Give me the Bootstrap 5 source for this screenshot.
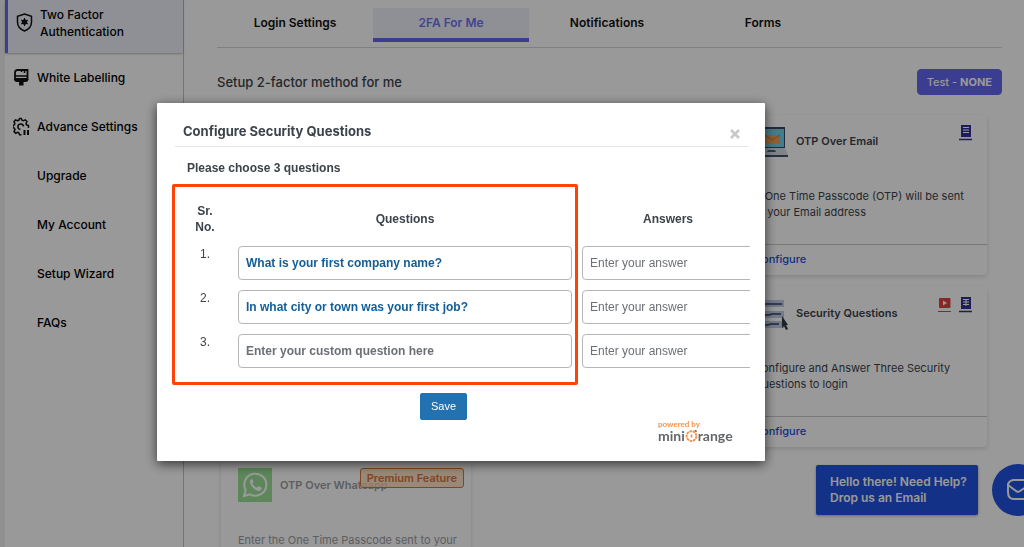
<!DOCTYPE html>
<html lang="en">
<head>
<meta charset="utf-8">
<meta name="viewport" content="width=device-width, initial-scale=1">
<title>Two Factor Authentication</title>
<link href="https://cdn.jsdelivr.net/npm/bootstrap@5.3.0/dist/css/bootstrap.min.css" rel="stylesheet">
<style>
  body { font-family: Inter, "Liberation Sans", sans-serif; font-size: 11px; line-height: 16px; background: #f0f0f1; color: #3c434a; }
  a { text-decoration: none; }
  .app { background: #fff; margin-left: 5px; }

  /* sidebar */
  .side { flex: 0 0 179px; border-right: 1px solid #c3c4c7; font-size: 12px; font-weight: 500; }
  .side a { color: #000; height: 49px; padding: 0 8px; gap: 7px; }
  .side a svg { flex: none; width: 17px; height: 19px; }
  .side a.plain { padding-left: 32px; }
  .side a.current { height: 53px; padding-bottom: 8px; border-left: 3px solid #6366f1; background: #eff1fa; box-shadow: 0 1px 2px #0004; line-height: 17px; }

  /* main area */
  .content-area { padding: 8px 22px 0 33px; }
  .tabs { border-bottom: 1px solid #d4d6da; padding-bottom: 5px; font-size: 12px; font-weight: 600; }
  .tabs a { flex: 0 0 156px; height: 34px; padding-top: 7px; color: #111; text-align: center; border-bottom: 4px solid transparent; }
  .tabs a.active { color: #6d73f0; background: #eff1fa; border-color: #6366f1; }
  .title-row { margin: 21px 0 20px; }
  .page-title { font-size: 13px; font-weight: 500; line-height: 20px; color: #3c434a; }
  .btn-test { --bs-btn-color: #fff; --bs-btn-bg: #6366f1; --bs-btn-border-color: #6366f1; --bs-btn-font-size: 11px; --bs-btn-font-weight: 500; --bs-btn-line-height: 16px; --bs-btn-padding-y: 4px; --bs-btn-padding-x: 9px; --bs-btn-border-radius: 4px; }
  .methods { --bs-gutter-x: 8px; --bs-gutter-y: 12px; margin-right: 11px; margin-left: 0; }
  .method { height: 160px; border: 0; border-radius: 4px; box-shadow: 0 2px 4px #0002; color: inherit; }
  .method-head { height: 73px; padding: 9px 14px 0 17px; gap: 8px; }
  .method-head h3 { font-size: 11px; font-weight: 600; line-height: 34px; margin: 0; }
  .method-text { padding: 0 8px 0 17px; flex: 1; margin: 0; }
  .method-foot { height: 31px; padding: 6px 17px; border-top: 1px solid #c9cacd; }
  .method-foot a { color: #1d4ed8; font-weight: 500; }
  .faded { color: #9a9da1; }
  .premium { top: 9px; right: 7px; height: 20px; padding: 1px 6px; font-size: 11px; font-weight: 600; color: #d9733b; background: #ffdcb8bf; border: 1px solid #d9733b; border-radius: 3px; }

  /* help bubble */
  .help { right: 46px; bottom: 32px; width: 162px; height: 50px; padding: 9px 8px 9px 14px; background: #2152e0; color: #fff; font-size: 12px; font-weight: 600; border-radius: 2px; box-shadow: 0 1px 3px #0005; }
  .help-icon { right: -20px; bottom: 31px; width: 52px; height: 52px; border: 0; padding: 0; }

  /* dialog */
  .modal { background: #0006; font-family: "Liberation Sans", Arial, sans-serif; font-size: 12px; padding-right: 102px; }
  .modal-dialog { max-width: 608px; margin: 103px auto 0; }
  .modal-content { border: 0; border-radius: 1px; box-shadow: 0 3px 12px #000a; color: #3c434a; padding: 17px 15px 19px 18px; }
  .modal-header { padding: 0 7px 4px 8px; border-bottom: 1px solid #e4e5e7; border-radius: 0; height: 27px; margin-right: 2px; }
  .modal-title { font-family: Inter, "Liberation Sans", sans-serif; font-size: 13px; line-height: 22px; font-weight: 700; }
  .close-x { border: 0; background: none; padding: 8px 0 0; line-height: 10px; }
  .modal-body { padding: 13px 0 0; }
  .lead-in { padding-left: 12px; margin: 0 0 20px; font-weight: 700; }
  .qa-wrap { overflow: hidden; }
  .qa { width: 590px; table-layout: fixed; margin-left: 2px; }
  .qa th { height: 45px; text-align: center; vertical-align: middle; padding: 0 5px; }
  .qa td { height: 44px; padding: 5px; vertical-align: top; text-align: center; }
  .qa .form-control, .qa .form-select { height: 34px; padding: 0 7px; border: 1px solid #b4b6b9; border-radius: 4px; font-size: 12px; line-height: 16px; background: #fff; color: #3c434a; }
  .qa .ask { font-weight: 700; }
  .qa .form-select { color: #135e96; }
  .qa .form-control::placeholder { color: #6c7075; opacity: 1; }
  .highlight { left: -3px; top: 37px; width: 406px; height: 201px; border: 3px solid #ff4208; border-radius: 2px; pointer-events: none; }
  .btn-save { --bs-btn-color: #fff; --bs-btn-bg: #2271b1; --bs-btn-border-color: #2271b1; --bs-btn-font-size: 11px; --bs-btn-line-height: 17px; --bs-btn-padding-y: 4px; --bs-btn-padding-x: 10px; --bs-btn-border-radius: 2px; }
  .save-row { padding: 20px 38px 0 0; }
  .brand { font-family: Lato, sans-serif; color: #63666a; width: 76px; line-height: 12px; font-size: 14px; font-weight: 700; }
  .brand-top { color: #f5924c; font-size: 8px; line-height: 9px; }
</style>
</head>
<body>
<div class="vh-100 overflow-hidden position-relative">
  <div class="app d-flex h-100">
    <nav class="side d-flex flex-column">
      <a href="#" class="current d-flex align-items-center">
        <svg viewBox="0 0 17 19" fill="none" stroke="#111" stroke-width="1.5"><path d="M8.500 1 L15.500 3.400 V9 C15.500 13.500 12.500 16.500 8.500 18 C4.500 16.500 1.500 13.500 1.500 9 V3.400 Z"/><circle cx="8.500" cy="9" r="2" fill="#111"/><path d="M8.500 5v8M5 7l7 4M12 7l-7 4" stroke-width="1"/></svg>
        <span>Two Factor Authentication</span></a>
      <a href="#" class="d-flex align-items-center">
        <svg viewBox="0 0 17 19" fill="none" stroke="#111" stroke-width="1.800"><path d="M2 11V4.500Q2 2 4.500 2H14.500V11Z"/><path d="M2 8H15M11.500 2v3M8.500 2v2" stroke-width="1.500"/><path d="M2 11q0 2 2 2h8.500q2 0 2-2"/><path d="M8.300 13v4.500" stroke-width="4.500"/></svg>
        <span>White Labelling</span></a>
      <a href="#" class="d-flex align-items-center">
        <svg viewBox="0 0 17 19" fill="none" stroke="#111" stroke-width="1.500"><path d="M15.500 11V8.500l-2-.7-.5-1.300 1-2-1.800-1.700-2 1L9 3.300 8.300 1.500H6.500L5.800 3.300l-1.300.5-2-.9L1 4.700l.9 1.900-.5 1.200-1.400.8v2l1.500.7.5 1.400-1 1.900 1.700 1.700 2-.9 1.200.5.600 1.800h2"/><path d="M10.500 9.500a2.800 2.800 0 1 0-3 3"/><path d="M11.500 13v5M15 13v5" stroke-width="2"/></svg>
        <span class="text-nowrap">Advance Settings</span></a>
      <a href="#" class="plain d-flex align-items-center">Upgrade</a>
      <a href="#" class="plain d-flex align-items-center">My Account</a>
      <a href="#" class="plain d-flex align-items-center">Setup Wizard</a>
      <a href="#" class="plain d-flex align-items-center">FAQs</a>
    </nav>

    <main class="content-area flex-grow-1">
      <nav class="tabs d-flex">
        <a href="#">Login Settings</a>
        <a href="#" class="active">2FA For Me</a>
        <a href="#">Notifications</a>
        <a href="#">Forms</a>
      </nav>
      <div class="title-row d-flex justify-content-between align-items-center">
        <h2 class="page-title m-0">Setup 2-factor method for me</h2>
        <button type="button" class="btn btn-test">Test - <b>NONE</b></button>
      </div>
      <div class="methods row">
        <div class="col-4 offset-8">
          <section class="method card">
            <div class="method-head d-flex">
              <svg width="34" height="34" viewBox="0 0 34 34"><rect x="3" y="3" width="28" height="21" fill="#324a68"/><rect x="4" y="5" width="26" height="18" fill="#6fd0e6"/><path d="M11 11h15v9H11z" fill="#f0a050"/><path d="M11 11l7.500 5L26 11" fill="none" stroke="#d17b35"/><path d="M3 24h28l3 7H0z" fill="#d7dde6"/><path d="M14 26h7l1 2h-9z" fill="#52627a"/><path d="M0 31h34v2H0z" fill="#41526c"/></svg>
              <h3>OTP Over Email</h3>
              <svg class="ms-auto" width="14" height="17" viewBox="0 0 14 17"><path d="M2 1h10v12H2z" fill="#35309a"/><path d="M4 3.500h6M4 6h6M4 8.500h6" stroke="#fff" stroke-width="1"/><path d="M0 15.500h13" stroke="#35309a" stroke-width="1.500"/></svg>
            </div>
            <p class="method-text">A One Time Passcode (OTP) will be sent<br>to your Email address</p>
            <div class="method-foot"><a href="#">Configure</a></div>
          </section>
        </div>
        <div class="col-4 offset-8">
          <section class="method card">
            <div class="method-head d-flex">
              <svg width="34" height="34" viewBox="0 0 34 34"><path d="M2 4h28v7H2zM2 15h28v7H2zM2 25h28v7H2z" fill="#c0ccea"/><path d="M5 8h10M14 8h14M5 19h10l3-1h9M5 29h8l4-1h8" stroke="#34435d" stroke-width="1.500" fill="none"/><path d="M28 20v12l2-2 2 4 2-1-2-4h2z" fill="#303641"/></svg>
              <h3>Security Questions</h3>
              <span class="ms-auto d-flex gap-2 align-items-start">
                <svg width="13" height="17" viewBox="0 0 13 17"><rect x="1" y="2" width="11.500" height="10" rx="1" fill="#e84040"/><path d="M5 4.500v5l4-2.500z" fill="#fff"/><path d="M0 15.500h13" stroke="#e84040"/></svg>
                <svg width="14" height="17" viewBox="0 0 14 17"><path d="M2 1h10v12H2z" fill="#35309a"/><path d="M4 3.500h6M4 6h6M4 8.500h6M7 3v7" stroke="#fff" stroke-width="1"/><path d="M0 15.500h13" stroke="#35309a" stroke-width="1.500"/></svg>
              </span>
            </div>
            <p class="method-text">Configure and Answer Three Security<br>Questions to login</p>
            <div class="method-foot"><a href="#">Configure</a></div>
          </section>
        </div>
        <div class="col-4">
          <section class="method card faded">
            <div class="method-head d-flex">
              <svg width="34" height="34" viewBox="0 0 34 34"><path d="M0 0h34v34H0z" fill="#9be096"/><path d="M6 28l1.700-6A11 11 0 1 1 12 26.300Z" fill="none" stroke="#fff" stroke-width="2"/><path d="M13.500 11q-2 1-1.500 3.500 2 6.500 8 8.500 3 0 3.800-2.500l-.3-1-3-1.500-1.500 1.700q-3-1-4.500-4l1-1.500-1-3z" fill="#fff"/></svg>
              <h3>OTP Over Whatsapp</h3>
              <span class="premium position-absolute">Premium Feature</span>
            </div>
            <p class="method-text">Enter the One Time Passcode sent to your</p>
          </section>
        </div>
      </div>
    </main>
  </div>
  <div class="help position-absolute">Hello there! Need Help?<br>Drop us an Email</div>
  <button type="button" class="help-icon position-absolute rounded-circle bg-transparent" aria-label="Email us">
    <svg width="52" height="52" viewBox="0 0 52 52" class="d-block"><circle cx="26" cy="26" r="26" fill="#2152e0"/><path d="M16 20q2-4 6-4h10q6 0 6 6v6q0 7-6 7H22q-6 0-6-7z" fill="none" stroke="#fff" stroke-width="2"/><path d="M16 21l8 6q2 1.500 4 0l9-6" fill="none" stroke="#fff" stroke-width="2"/></svg>
  </button>
</div>

<div class="modal d-block overflow-hidden" tabindex="-1" role="dialog" aria-labelledby="dlgTitle">
  <div class="modal-dialog">
    <div class="modal-content">
      <div class="modal-header align-items-start">
        <h1 class="modal-title" id="dlgTitle">Configure Security Questions</h1>
        <button type="button" class="close-x" aria-label="Close"><svg width="12" height="12" viewBox="0 0 12 12"><path d="M2 2l8 8M10 2l-8 8" stroke="#c6c8ca" stroke-width="2.500"/></svg></button>
      </div>
      <div class="modal-body">
        <p class="lead-in">Please choose 3 questions</p>
        <div class="qa-wrap">
          <table class="qa">
            <colgroup><col style="width:56px"><col style="width:344px"><col style="width:190px"></colgroup>
            <thead><tr><th>Sr.<br>No.</th><th>Questions</th><th><div class="pe-2">Answers</div></th></tr></thead>
            <tbody>
              <tr><td>1.</td><td><select class="form-select ask" aria-label="Question 1"><option>What is your first company name?</option></select></td><td><input class="form-control" aria-label="Answer 1" placeholder="Enter your answer"></td></tr>
              <tr><td>2.</td><td><select class="form-select ask" aria-label="Question 2"><option>In what city or town was your first job?</option></select></td><td><input class="form-control" aria-label="Answer 2" placeholder="Enter your answer"></td></tr>
              <tr><td>3.</td><td><input class="form-control ask" aria-label="Question 3" placeholder="Enter your custom question here"></td><td><input class="form-control" aria-label="Answer 3" placeholder="Enter your answer"></td></tr>
            </tbody>
          </table>
        </div>
        <div class="highlight position-absolute"></div>
        <div class="save-row text-center"><button type="button" class="btn btn-save">Save</button></div>
        <div class="brand ms-auto me-3">
          <div class="brand-top">powered by</div>
          <div class="d-flex align-items-center">mini<svg width="13" height="13" viewBox="0 0 12 12" fill="none" stroke="#f5924c"><circle cx="6" cy="6.500" r="4.500" stroke-width="1.800" stroke-dasharray="2.500 .6"/><path d="M6 5v3" stroke-width="1.500"/><path d="M9.500 1l1 1.500" stroke="#63666a" stroke-width="1.500"/></svg>range</div>
        </div>
      </div>
    </div>
  </div>
</div>
<script src="https://cdn.jsdelivr.net/npm/bootstrap@5.3.0/dist/js/bootstrap.bundle.min.js"></script>
</body>
</html>
